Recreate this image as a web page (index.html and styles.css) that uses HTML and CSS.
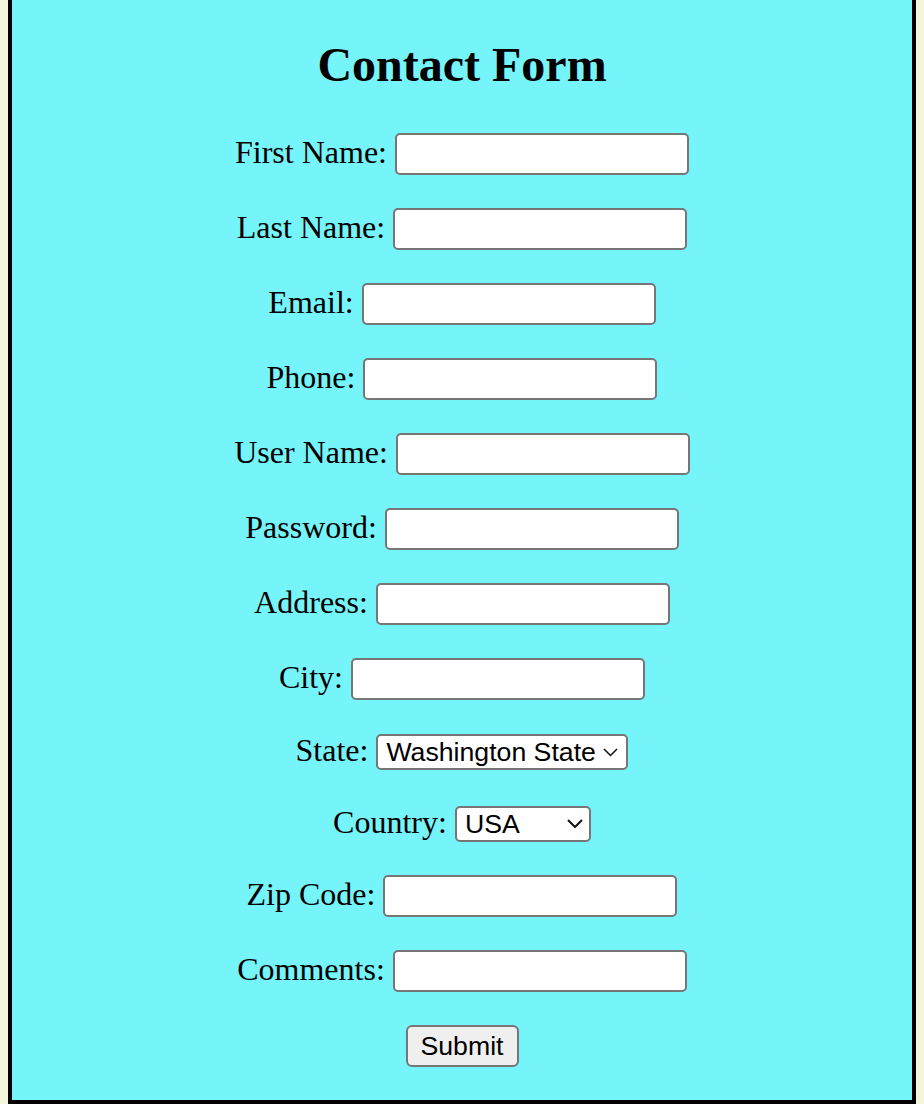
FILE: index.html
```html
<!DOCTYPE html>
<html lang="en">
<head>
<meta charset="utf-8">
<title>Contact Form</title>
<link rel="stylesheet" href="styles.css">
</head>
<body>
<div class="page">
  <h2 class="title">Contact Form</h2>
  <form class="form">
    <div class="row"><label class="label">First Name:</label><input class="field" type="text"></div>
    <div class="row"><label class="label">Last Name:</label><input class="field" type="text"></div>
    <div class="row"><label class="label">Email:</label><input class="field" type="text"></div>
    <div class="row"><label class="label">Phone:</label><input class="field" type="text"></div>
    <div class="row"><label class="label">User Name:</label><input class="field" type="text"></div>
    <div class="row"><label class="label">Password:</label><input class="field" type="password"></div>
    <div class="row"><label class="label">Address:</label><input class="field" type="text"></div>
    <div class="row"><label class="label">City:</label><input class="field" type="text"></div>
    <div class="row row-select row-state">
      <label class="label">State:</label>
      <span class="select-wrap">
        <select class="select select-state"><option>Washington State</option><option>Oregon</option></select>
        <svg class="chev chev-state" width="15" height="9" viewBox="0 0 15 9"><polyline points="1,1 7.5,7.5 14,1" fill="none" stroke="#111" stroke-width="1.5"/></svg>
      </span>
    </div>
    <div class="row row-select row-country">
      <label class="label">Country:</label>
      <span class="select-wrap">
        <select class="select select-country"><option>USA</option><option>Canada</option></select>
        <svg class="chev chev-country" width="16" height="9" viewBox="0 0 16 9"><polyline points="1,1 8,8 15,1" fill="none" stroke="#111" stroke-width="2"/></svg>
      </span>
    </div>
    <div class="row row-zip"><label class="label">Zip Code:</label><input class="field" type="text"></div>
    <div class="row"><label class="label">Comments:</label><input class="field" type="text"></div>
    <div class="row"><button class="submit" type="button">Submit</button></div>
  </form>
</div>
</body>
</html>
```
FILE: styles.css
```css
html, body {
  background: #f5f5dc;
}
body {
  margin: 0;
  padding: 0 8px;
}
.page {
  box-sizing: border-box;
  height: 1104px;
  background: #75f4fa;
  border: 4px solid #000;
  border-top: 0;
  padding-top: 37px;
}
.title {
  margin: 0 0 41px;
  font-family: "Liberation Serif", "Times New Roman", serif;
  font-weight: bold;
  font-size: 48px;
  line-height: 55px;
  text-align: center;
  color: #000;
}
.form {
  display: flex;
  flex-direction: column;
  margin: 0;
}
.row {
  display: flex;
  justify-content: center;
  align-items: center;
  gap: 8px;
  height: 42px;
  margin-top: 33px;
}
.row:first-child {
  margin-top: 0;
}
.row-select {
  height: 36px;
}
.row-state {
  margin-top: 34px;
}
.row-country {
  margin-top: 36px;
}
.row-zip {
  margin-top: 33px;
}
.label {
  font-family: "Liberation Serif", "Times New Roman", serif;
  font-size: 32px;
  color: #000;
  margin-bottom: 3px;
  white-space: nowrap;
}
.field {
  -webkit-appearance: none;
  appearance: none;
  box-sizing: border-box;
  width: 294px;
  height: 42px;
  margin: 0;
  padding: 0 6px;
  background: #fff;
  border: 2px solid #767676;
  border-radius: 5px;
  font-family: "Liberation Sans", Arial, sans-serif;
  font-size: 26.67px;
}
.select-wrap {
  position: relative;
  display: block;
  height: 36px;
}
.select {
  -webkit-appearance: none;
  appearance: none;
  box-sizing: border-box;
  height: 36px;
  margin: 0;
  padding: 0 0 0 8px;
  background: #fff;
  color: #000;
  border: 2px solid #767676;
  border-radius: 5px;
  font-family: "Liberation Sans", Arial, sans-serif;
  font-size: 26.67px;
}
.select-state {
  width: 252px;
}
.select-country {
  width: 136px;
}
.chev {
  position: absolute;
  pointer-events: none;
}
.chev-state {
  left: 227px;
  top: 14px;
}
.chev-country {
  left: 112px;
  top: 13px;
}
.submit {
  box-sizing: border-box;
  width: 113px;
  height: 42px;
  margin: 0;
  padding: 0;
  background: #efefef;
  color: #000;
  border: 2px solid #767676;
  border-radius: 6px;
  font-family: "Liberation Sans", Arial, sans-serif;
  font-size: 26.67px;
}
```
